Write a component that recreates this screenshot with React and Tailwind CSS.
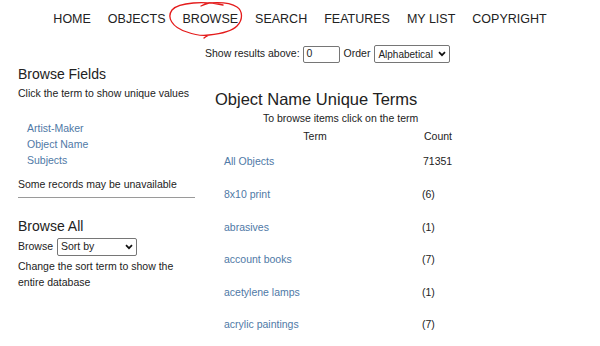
import React from "react";

const rows = [
  ["8x10 print", "(6)"],
  ["abrasives", "(1)"],
  ["account books", "(7)"],
  ["acetylene lamps", "(1)"],
  ["acrylic paintings", "(7)"],
];

function Chevron() {
  return (
    <svg width="8" height="6" viewBox="0 0 8 6" className="ml-auto shrink-0">
      <path d="M1 1.2 L4 4.2 L7 1.2" fill="none" stroke="#111" strokeWidth="1.7" />
    </svg>
  );
}

export default function App() {
  return (
    <div className="w-[600px] h-[346px] overflow-hidden bg-white text-[#222] font-['Liberation_Sans',Arial,sans-serif]">
      <nav className="relative flex justify-center gap-[17px] pt-[11px] text-[12.5px] text-[#222] leading-[16px]">
        <span>HOME</span>
        <span>OBJECTS</span>
        <span className="relative">
          BROWSE
          <svg className="absolute left-[-19px] top-[-11px]" width="82" height="40" viewBox="0 0 80 40">
            <path
              d="M58 5 C40 1 14 2 7 10 C2 17 6 27 22 32 C30 35 38 36 44 35 C54 34 66 32 72 26 C78 20 78 11 72 7 C66 3 56 2 44 3 C40 4 38 5 36 6 M44 35 C42 36 40 37 39 38"
              fill="none"
              stroke="#e41b1b"
              strokeWidth="1.3"
              strokeLinecap="round"
            />
          </svg>
        </span>
        <span>SEARCH</span>
        <span>FEATURES</span>
        <span>MY LIST</span>
        <span>COPYRIGHT</span>
      </nav>

      <div className="flex items-center pl-[205px] mt-[18px] text-[10.5px] gap-[3px]">
        <span>Show results above:</span>
        <div className="w-[37px] h-[17px] border border-[#767676] rounded-[2px] px-[3px] flex items-center">0</div>
        <span className="ml-[1px]">Order</span>
        <div className="w-[76px] h-[18px] border border-[#767676] rounded-[2px] pl-[3px] pr-[3px] flex items-center ml-[1px] text-[10px]">
          <span className="whitespace-nowrap">Alphabetical</span>
          <Chevron />
        </div>
      </div>

      <div className="flex mt-[1px]">
        <div className="w-[177px] ml-[18px] shrink-0 pt-[1px]">
          <div className="text-[14px] leading-[18px]">Browse Fields</div>
          <div className="text-[10.5px] leading-[16px] mt-[2px]">Click the term to show unique values</div>
          <div className="mt-[19px] pl-[9px] text-[10.5px] leading-[16px] text-[#4f79a6]">
            <div>Artist-Maker</div>
            <div>Object Name</div>
            <div>Subjects</div>
          </div>
          <div className="text-[10.5px] leading-[16px] mt-[8px]">Some records may be unavailable</div>
          <div className="h-px bg-[#9a9a9a] mt-[5px]" />
          <div className="text-[14px] leading-[18px] mt-[19px]">Browse All</div>
          <div className="flex items-center gap-[4px] mt-[3px] text-[10.5px]">
            <span>Browse</span>
            <div className="w-[80px] h-[18px] border border-[#767676] rounded-[2px] px-[3px] flex items-center">
              <span>Sort by</span>
              <Chevron />
            </div>
          </div>
          <div className="text-[10.5px] leading-[16px] mt-[2px] w-[170px]">
            Change the sort term to show the entire database
          </div>
        </div>

        <div className="ml-[20px] w-[260px]">
          <div className="text-[16.5px] leading-[20px] mt-[25px]">Object Name Unique Terms</div>
          <div className="text-[10.5px] leading-[14px] mt-[2px] pl-[48px]">To browse items click on the term</div>
          <div className="flex text-[10.5px] leading-[14px] mt-[4px]">
            <div className="w-[200px] text-center">Term</div>
            <div className="pl-[9px]">Count</div>
          </div>
          <div className="flex text-[10.5px] leading-[14px] mt-[11px] h-[33px]">
            <div className="w-[208px] pl-[9px] text-[#4f79a6]">All Objects</div>
            <div>71351</div>
          </div>
          {rows.map(([t, c]) => (
            <div key={t} className="flex text-[10.5px] leading-[14px] h-[32.6px]">
              <div className="w-[207px] pl-[9px] text-[#4f79a6]">{t}</div>
              <div>{c}</div>
            </div>
          ))}
        </div>
      </div>
    </div>
  );
}
